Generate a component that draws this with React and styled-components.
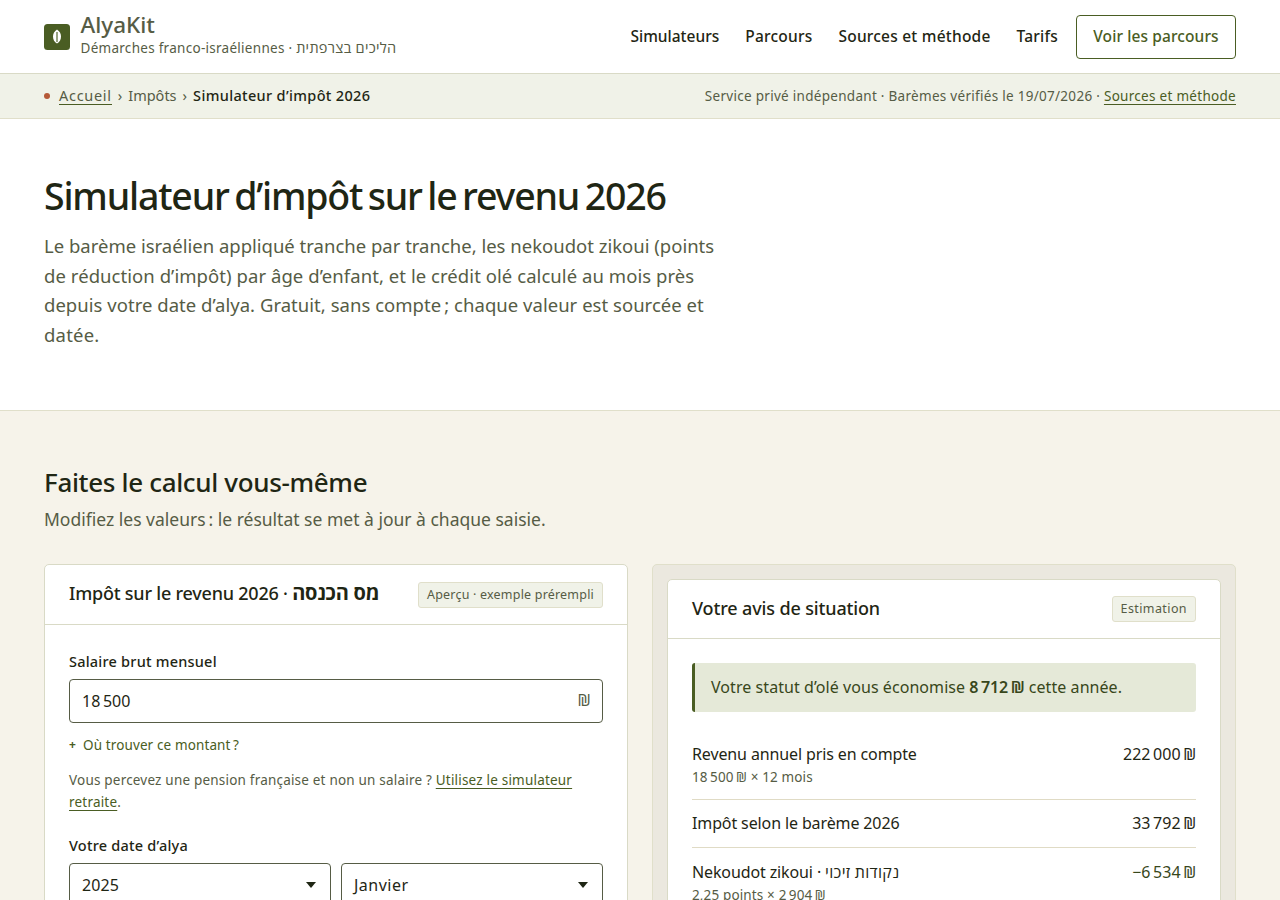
import React from "react";
import styled, { createGlobalStyle } from "styled-components";

function App() {
  return (
    <>
      <GlobalStyle />
      <Header>
        <Brand href="#">
          <Mark viewBox="0 0 26 26">
            <rect width="26" height="26" rx="3.5" fill="#4a5d23" />
            <path
              d="M13 5.5c2.6 1.6 4 4.200 4 7.200s-1.400 5.200-4 6.800c-2.600-1.600-4-3.800-4-6.800s1.400-5.600 4-7.200z"
              fill="#fff"
            />
            <path d="M13 8v10" stroke="#7f8c62" strokeWidth="1.6" />
          </Mark>
          <BrandText>
            <BrandName>AlyaKit</BrandName>
            <Tagline>
              Démarches franco-israéliennes · <Hebrew>הליכים בצרפתית</Hebrew>
            </Tagline>
          </BrandText>
        </Brand>
        <Nav>
          <NavLink href="#" $spacing="0">
            Simulateurs
          </NavLink>
          <NavLink href="#">Parcours</NavLink>
          <NavLink href="#">Sources et méthode</NavLink>
          <NavLink href="#">Tarifs</NavLink>
          <NavButton href="#">Voir les parcours</NavButton>
        </Nav>
      </Header>

      <Strip>
        <Crumbs>
          <Dot />
          <CrumbLink href="#">Accueil</CrumbLink>
          <span>›</span>
          <span>Impôts</span>
          <span>›</span>
          <Current>Simulateur d’impôt 2026</Current>
        </Crumbs>
        <Status>
          Service privé indépendant · Barèmes vérifiés le 19/07/2026 ·{" "}
          <TextLink href="#">Sources et méthode</TextLink>
        </Status>
      </Strip>

      <Hero>
        <Title>Simulateur d’impôt sur le revenu 2026</Title>
        <Lead>
          <LeadLine>
            Le barème israélien appliqué tranche par tranche, les nekoudot
            zikoui (points
          </LeadLine>
          <LeadLine $spacing="0.06px">
            de réduction d’impôt) par âge d’enfant, et le crédit olé calculé au
            mois près
          </LeadLine>
          <LeadLine $spacing="0.03px">
            depuis votre date d’alya. Gratuit, sans compte&#8239;; chaque valeur
            est sourcée et
          </LeadLine>
          <LeadLine $spacing="0.2px">datée.</LeadLine>
        </Lead>
      </Hero>

      <Section>
        <SectionTitle>Faites le calcul vous-même</SectionTitle>
        <SectionText>
          Modifiez les valeurs&#8239;: le résultat se met à jour à chaque
          saisie.
        </SectionText>
        <Columns>
          <Card>
            <CardHead>
              <CardTitle $spacing="-0.22px">
                Impôt sur le revenu 2026 · <HebrewStrong>מס הכנסה</HebrewStrong>
              </CardTitle>
              <Badge>Aperçu · exemple prérempli</Badge>
            </CardHead>
            <CardBody>
              <Label>Salaire brut mensuel</Label>
              <Field>
                <span>18&#8239;500</span>
                <Unit>₪</Unit>
              </Field>
              <Hint>
                <Plus>+</Plus>Où trouver ce montant&#8239;?
              </Hint>
              <Note>
                Vous percevez une pension française et non un salaire ?{" "}
                <TextLink href="#">
                  Utilisez le simulateur
                  <br />
                  retraite
                </TextLink>
                .
              </Note>
              <Label>Votre date d’alya</Label>
              <Selects>
                <Field>
                  <span>2025</span>
                  <Caret />
                </Field>
                <Field $spacing="0.5px">
                  <span>Janvier</span>
                  <Caret />
                </Field>
              </Selects>
            </CardBody>
          </Card>

          <Tray>
            <Card>
              <CardHead $height="59px">
                <CardTitle>Votre avis de situation</CardTitle>
                <Badge $spacing="0.4px">Estimation</Badge>
              </CardHead>
              <CardBody>
                <Callout>
                  Votre statut d’olé vous économise{" "}
                  <strong>8&#8239;712&#8239;₪</strong> cette année.
                </Callout>
                <Line>
                  <div>
                    Revenu annuel pris en compte
                    <Detail>18&#8239;500&#8239;₪ × 12 mois</Detail>
                  </div>
                  <Amount>222&#8239;000&#8239;₪</Amount>
                </Line>
                <Line>
                  <div>Impôt selon le barème 2026</div>
                  <Amount>33&#8239;792&#8239;₪</Amount>
                </Line>
                <Line>
                  <div>
                    Nekoudot zikoui · <HebrewTerm>נקודות זיכוי</HebrewTerm>
                    <Detail>2,25 points × 2&#8239;904&#8239;₪</Detail>
                  </div>
                  <Amount $credit>−6&#8239;534&#8239;₪</Amount>
                </Line>
              </CardBody>
            </Card>
          </Tray>
        </Columns>
      </Section>
    </>
  );
}

const GlobalStyle = createGlobalStyle`
  * {
    box-sizing: border-box;
  }
  html {
    overflow: hidden;
  }
  body {
    margin: 0;
    height: 900px;
    overflow: hidden;
    background: #fff;
    color: #1f2614;
    font-family: "Noto Sans", "Open Sans", "DejaVu Sans", sans-serif;
    font-size: 16px;
    line-height: 1.6;
  }
  a {
    color: inherit;
    text-decoration: none;
  }
`;

const Header = styled.header`
  height: 74px;
  padding: 0 44px;
  display: flex;
  align-items: center;
  justify-content: space-between;
  border-bottom: 1px solid #d9dac6;
`;

const Brand = styled.a`
  display: flex;
  align-items: center;
  gap: 10.5px;
  color: #565c45;
`;

const Mark = styled.svg`
  width: 26px;
  height: 26px;
`;

const BrandText = styled.div`
  display: flex;
  flex-direction: column;
  padding-bottom: 1px;
`;

const BrandName = styled.span`
  font-size: 22.5px;
  font-weight: 500;
  line-height: 25px;
  letter-spacing: 0;
`;

const Tagline = styled.span`
  font-size: 13.5px;
  line-height: 23px;
  letter-spacing: 0.28px;
`;

const Hebrew = styled.bdi`
  font-size: 14.5px;
  line-height: 20px;
`;

const HebrewStrong = styled.bdi`
  font-family: "Open Sans", "Noto Sans", sans-serif;
  font-size: 20px;
  font-weight: 700;
  line-height: 20px;
`;

const HebrewTerm = styled.bdi`
  letter-spacing: 0.3px;
`;

const Nav = styled.nav`
  display: flex;
  align-items: center;
  gap: 26px;
`;

const NavLink = styled.a`
  font-size: 15.5px;
  font-weight: 500;
  letter-spacing: ${(props) => props.$spacing || "0.22px"};
`;

const NavButton = styled.a`
  width: 160px;
  height: 44px;
  margin-left: -8px;
  display: flex;
  align-items: center;
  justify-content: center;
  border: 1px solid #4a5d23;
  border-radius: 4px;
  color: #4a5d23;
  font-size: 15.5px;
  font-weight: 500;
  letter-spacing: 0.1px;
`;

const Strip = styled.div`
  height: 45px;
  padding: 0 44px;
  display: flex;
  align-items: center;
  justify-content: space-between;
  background: #f0f2e8;
  border-bottom: 1px solid #e0dfca;
  color: #565c45;
`;

const Crumbs = styled.div`
  padding-bottom: 1px;
  display: flex;
  align-items: center;
  gap: 6px;
  font-size: 14.5px;
  line-height: 17px;
`;

const Dot = styled.i`
  width: 6px;
  height: 6px;
  margin-right: 3px;
  border-radius: 50%;
  background: #b55a38;
`;

const CrumbLink = styled.a`
  margin-bottom: -1px;
  border-bottom: 1px solid #4a5d23;
  letter-spacing: 0.7px;
`;

const Current = styled.span`
  color: #1f2614;
  font-weight: 500;
  letter-spacing: 0.34px;
`;

const Status = styled.div`
  font-size: 13.5px;
  line-height: 17px;
  letter-spacing: 0.29px;
`;

const TextLink = styled.a`
  color: #4a5d23;
  text-decoration: underline;
  text-decoration-thickness: 1px;
  text-underline-offset: 3px;
  text-decoration-skip-ink: none;
`;

const Hero = styled.section`
  height: 292px;
  padding: 54px 44px 0;
  border-bottom: 1px solid #e0dfca;
`;

const Title = styled.h1`
  margin: 0 0 12px;
  font-size: 37.5px;
  font-weight: 500;
  line-height: 46px;
  letter-spacing: -1.2px;
  word-spacing: -3px;
`;

const Lead = styled.p`
  margin: 0;
  color: #565c45;
  font-size: 18.5px;
  line-height: 29.6px;
`;

const LeadLine = styled.span`
  display: block;
  white-space: nowrap;
  letter-spacing: ${(props) => props.$spacing || "0"};
`;

const Section = styled.section`
  height: 489px;
  padding: 53px 44px 0;
  overflow: hidden;
  background: #f6f3ea;
`;

const SectionTitle = styled.h2`
  margin: 0;
  font-size: 26px;
  font-weight: 500;
  line-height: 36px;
  letter-spacing: -0.34px;
`;

const SectionText = styled.p`
  margin: 4px 0 30px;
  color: #565c45;
  font-size: 17.5px;
  line-height: 30px;
`;

const Columns = styled.div`
  display: grid;
  grid-template-columns: 1fr 1fr;
  gap: 24px;
`;

const Card = styled.div`
  height: 420px;
  background: #fff;
  border: 1px solid #d9dac6;
  border-radius: 5px;
`;

const Tray = styled.div`
  padding: 14px;
  background: #ebe8df;
  border: 1px solid #e0dfca;
  border-radius: 5px;
`;

const CardHead = styled.div`
  height: ${(props) => props.$height || "60px"};
  padding: 0 24px 1px;
  display: flex;
  align-items: center;
  justify-content: space-between;
  border-bottom: 1px solid #d9dac6;
`;

const CardTitle = styled.h3`
  margin: 0 0 2px;
  font-size: 18px;
  font-weight: 500;
  line-height: 28px;
  letter-spacing: ${(props) => props.$spacing || "-0.14px"};
`;

const Badge = styled.span`
  height: 26px;
  padding: 0 8px;
  margin-top: 1px;
  display: flex;
  align-items: center;
  background: #f0f2e8;
  border: 1px solid #e0dfca;
  border-radius: 3px;
  color: #565c45;
  font-size: 12.5px;
  letter-spacing: ${(props) => props.$spacing || "0.2px"};
`;

const CardBody = styled.div`
  padding: 24px;
`;

const Label = styled.div`
  margin-bottom: 6px;
  font-size: 14.5px;
  font-weight: 500;
  line-height: 24px;
  letter-spacing: 0.22px;
`;

const Field = styled.div`
  height: 44px;
  padding: 2px 12px 0;
  display: flex;
  align-items: center;
  justify-content: space-between;
  border: 1px solid #565c45;
  border-radius: 4px;
  font-size: 16px;
  letter-spacing: ${(props) => props.$spacing || "0.1px"};
`;

const Unit = styled.span`
  margin-bottom: 3px;
  color: #565c45;
  font-size: 16.5px;
  letter-spacing: -0.6px;
`;

const Hint = styled.div`
  margin-top: 11px;
  display: flex;
  align-items: center;
  gap: 7px;
  color: #4a5d23;
  font-size: 13.5px;
  line-height: 22px;
  letter-spacing: 0.12px;
`;

const Plus = styled.b`
  font-size: 12px;
`;

const Note = styled.p`
  margin: 13px 0 20px;
  color: #565c45;
  font-size: 13.5px;
  line-height: 22px;
  letter-spacing: 0.2px;
`;

const Selects = styled.div`
  display: grid;
  grid-template-columns: 1fr 1fr;
  gap: 10px;
`;

const Caret = styled.i`
  margin: 0 2px 3px 0;
  border: 5px solid transparent;
  border-top: 6px solid #1f2614;
  border-bottom: 0;
`;

const Callout = styled.div`
  height: 49px;
  margin-bottom: 18px;
  padding: 0 16px;
  background: #e5e9d8;
  border-left: 3px solid #4a5d23;
  border-radius: 3px;
  color: #38471b;
  font-size: 16px;
  line-height: 49px;
  letter-spacing: 0.06px;
  strong {
    font-weight: 600;
    letter-spacing: -0.1px;
  }
`;

const Line = styled.div`
  padding: 11.6px 0 10.4px;
  display: flex;
  justify-content: space-between;
  border-bottom: 1px solid #e0dbc5;
  font-size: 16px;
  line-height: 25.6px;
  letter-spacing: -0.12px;
`;

const Detail = styled.div`
  height: 21px;
  color: #565c45;
  font-size: 13.5px;
  line-height: 20px;
  letter-spacing: 0.14px;
`;

const Amount = styled.div`
  letter-spacing: 0;
  color: ${(props) => (props.$credit ? "#38471b" : "#1f2614")};
`;

export default App;
